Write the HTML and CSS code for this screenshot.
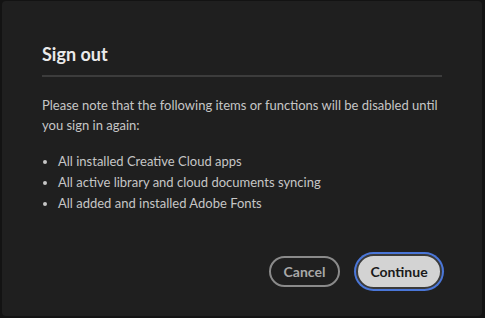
FILE: index.html
```html
<!DOCTYPE html>
<html lang="en">
<head>
    <meta charset="UTF-8">
    <title>Sign out</title>
    <link rel="stylesheet" href="styles.css">
</head>
<body>
    <div class="dialog">
        <h2 class="title">Sign out</h2>
        <div class="divider"></div>
        <p class="note">Please note that the following items or functions will be disabled until you sign in again:</p>
        <ul class="items">
            <li>All installed Creative Cloud apps</li>
            <li>All active library and cloud documents syncing</li>
            <li>All added and installed Adobe Fonts</li>
        </ul>
        <div class="actions">
            <button class="btn btn-secondary">Cancel</button>
            <button class="btn btn-primary">Continue</button>
        </div>
    </div>
</body>
</html>
```

FILE: styles.css
```css
body {
    margin: 0;
    background: #131313;
    font-family: Lato, "Open Sans", sans-serif;
    height: 318px;
    overflow: hidden;
}
.dialog {
    box-sizing: border-box;
    margin: 1px 3px 0 2px;
    height: 315px;
    background: #1f1f1f;
    border-radius: 4px;
    padding: 42px 40px 0 40px;
    display: flex;
    flex-direction: column;
}
.title {
    margin: 0;
    font-size: 18px;
    font-weight: bold;
    color: #eaeaea;
    line-height: 22px;
}
.divider {
    height: 2px;
    background: #3c3c3c;
    margin: 10px 0 0;
}
.note {
    margin: 18px 0 0;
    font-size: 13px;
    line-height: 20px;
    color: #c6c6c6;
}
.items {
    margin: 16px 0 0;
    padding: 0 0 0 16px;
    font-size: 13px;
    line-height: 21px;
    color: #c6c6c6;
}
.actions {
    margin-top: auto;
    margin-bottom: 27px;
    display: flex;
    justify-content: flex-end;
    align-items: center;
    gap: 16px;
}
.btn {
    box-sizing: border-box;
    font-family: inherit;
    font-size: 14px;
    font-weight: bold;
    border-radius: 18px;
    padding: 0;
}
.btn-secondary {
    width: 71px;
    height: 31px;
    background: transparent;
    border: 2px solid #8a8a8a;
    color: #a8a8a8;
}
.btn-primary {
    width: 86px;
    height: 35px;
    background: #d3d3d3;
    border: 2px solid #3a3a3a;
    color: #1a1a1a;
    box-shadow: 0 0 0 2px #4a76d8;
    margin-right: 0;
}
```
